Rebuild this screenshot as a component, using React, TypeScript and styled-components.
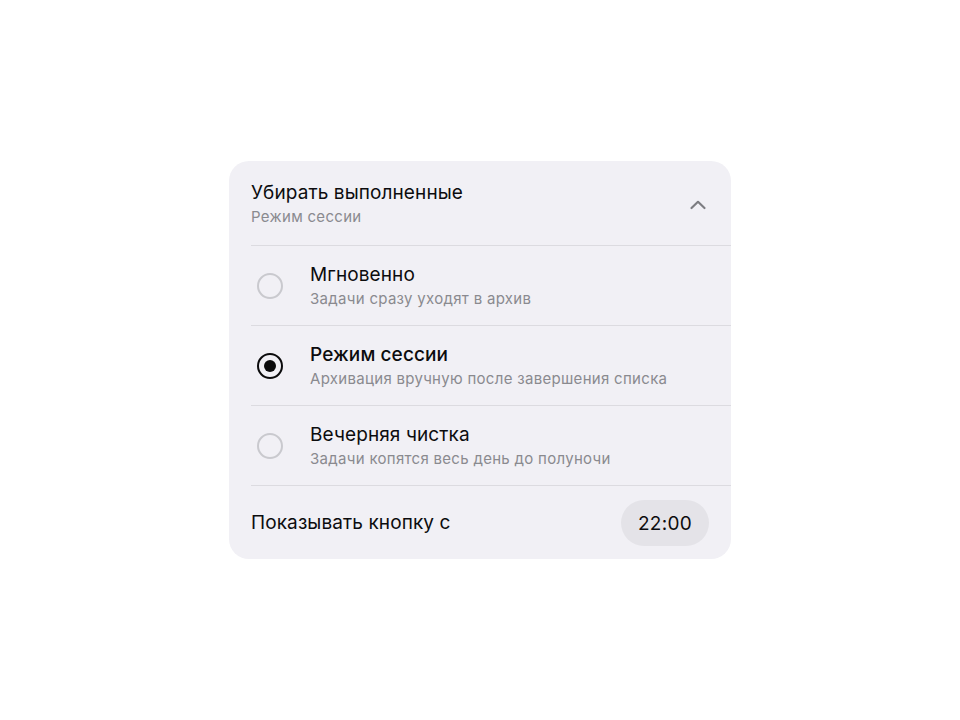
import styled, { createGlobalStyle } from "styled-components"
import { useState } from "react"

const GlobalStyle = createGlobalStyle`
  html, body {
    margin: 0;
    padding: 0;
    background: #ffffff;
    font-family: Inter, "Noto Sans", "Liberation Sans", sans-serif;
    -webkit-font-smoothing: antialiased;
  }
`

const Page = styled.div`
  width: 960px;
  height: 720px;
  display: flex;
  align-items: center;
  justify-content: center;
`

const Card = styled.section`
  width: 502px;
  background: #f1f0f5;
  border-radius: 20px;
  overflow: hidden;
`

const Header = styled.div`
  display: flex;
  align-items: center;
  justify-content: space-between;
  padding: 21px 23px 19px 22px;
`

const HeaderText = styled.div`
  display: flex;
  flex-direction: column;
  gap: 4px;
`

const Title = styled.div<{ $strong?: boolean }>`
  font-size: 19px;
  line-height: 22px;
  color: #0c0c0e;
  font-weight: ${p => (p.$strong ? 500 : 400)};
  letter-spacing: 0.1px;
`

const Sub = styled.div`
  font-size: 15px;
  line-height: 18px;
  color: #8a8a8f;
  letter-spacing: 0.3px;
`

const Chevron = styled.svg`
  width: 20px;
  height: 20px;
  margin-top: 2px;
`

const Option = styled.label`
  display: flex;
  align-items: center;
  gap: 27px;
  margin-left: 22px;
  padding: 18px 0 17px 6px;
  border-top: 1px solid #dcdbe0;
  cursor: pointer;
`

const Radio = styled.span<{ $on?: boolean }>`
  flex: none;
  width: 26px;
  height: 26px;
  box-sizing: border-box;
  border-radius: 50%;
  border: ${p => (p.$on ? "2.5px solid #0b0b0c" : "2px solid #c9c9ce")};
  display: flex;
  align-items: center;
  justify-content: center;

  &::after {
    content: "";
    display: ${p => (p.$on ? "block" : "none")};
    width: 12px;
    height: 12px;
    border-radius: 50%;
    background: #0b0b0c;
  }
`

const OptionText = styled.div`
  display: flex;
  flex-direction: column;
  gap: 4px;
`

const Footer = styled.div`
  display: flex;
  align-items: center;
  justify-content: space-between;
  margin-left: 22px;
  padding: 14px 22px 13px 0;
  border-top: 1px solid #dcdbe0;
`

const TimePill = styled.button`
  height: 46px;
  width: 88px;
  border: none;
  border-radius: 23px;
  background: #e4e3e8;
  color: #0c0c0e;
  font-family: inherit;
  font-size: 19px;
  letter-spacing: 0.3px;
  cursor: pointer;
`

const options = [
  { id: "instant", title: "Мгновенно", sub: "Задачи сразу уходят в архив" },
  { id: "session", title: "Режим сессии", sub: "Архивация вручную после завершения списка" },
  { id: "evening", title: "Вечерняя чистка", sub: "Задачи копятся весь день до полуночи" },
]

export default function App() {
  const [mode, setMode] = useState("session")
  const current = options.find(o => o.id === mode)

  return (
    <>
      <GlobalStyle />
      <Page>
        <Card>
          <Header>
            <HeaderText>
              <Title>Убирать выполненные</Title>
              <Sub>{current?.title}</Sub>
            </HeaderText>
            <Chevron viewBox="0 0 20 20" fill="none">
              <path d="M3.5 13 L10 6.8 L16.5 13" stroke="#7d7d82" strokeWidth="2.2" strokeLinecap="round" strokeLinejoin="round" />
            </Chevron>
          </Header>
          {options.map(o => (
            <Option key={o.id} onClick={() => setMode(o.id)}>
              <Radio $on={o.id === mode} />
              <OptionText>
                <Title $strong={o.id === mode}>{o.title}</Title>
                <Sub>{o.sub}</Sub>
              </OptionText>
            </Option>
          ))}
          <Footer>
            <Title>Показывать кнопку с</Title>
            <TimePill>22:00</TimePill>
          </Footer>
        </Card>
      </Page>
    </>
  )
}
